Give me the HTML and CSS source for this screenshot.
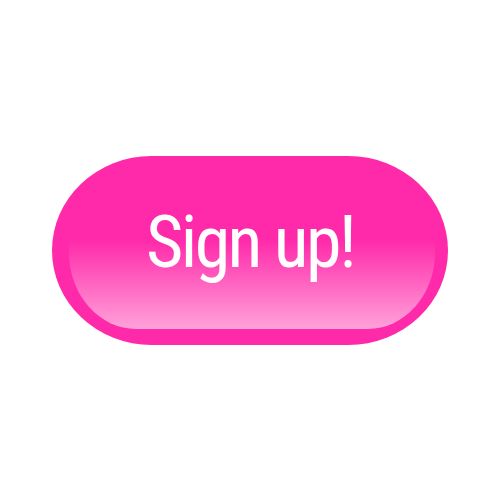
FILE: index.html
```html
<!DOCTYPE html>
<html><head><meta charset="utf-8"><link rel="stylesheet" href="styles.css"></head>
<body>
<div class="page">
  <button class="btn"><span class="label">Sign up!</span></button>
</div>
</body></html>
```
FILE: styles.css
```css
html,body{margin:0;padding:0;background:#fff}
.page{height:500px;display:flex;align-items:center;justify-content:center}
.btn{position:relative;width:396px;height:189px;border:0;border-radius:100px/95px;background:#ff2aaa;padding:0 0 14px 0;display:flex;align-items:center;justify-content:center;cursor:pointer;overflow:hidden}
.btn::after{content:"";position:absolute;left:17px;right:13px;top:20px;bottom:16px;border-radius:72px/82px;background:linear-gradient(to bottom,rgba(255,255,255,0) 0%,rgba(255,255,255,0) 42%,rgba(255,255,255,.56) 100%)}
.label{position:relative;z-index:1;color:#fff;font-family:Roboto,"Liberation Sans",sans-serif;font-stretch:condensed;font-weight:400;font-size:72px;line-height:1;letter-spacing:-2.6px}
```
